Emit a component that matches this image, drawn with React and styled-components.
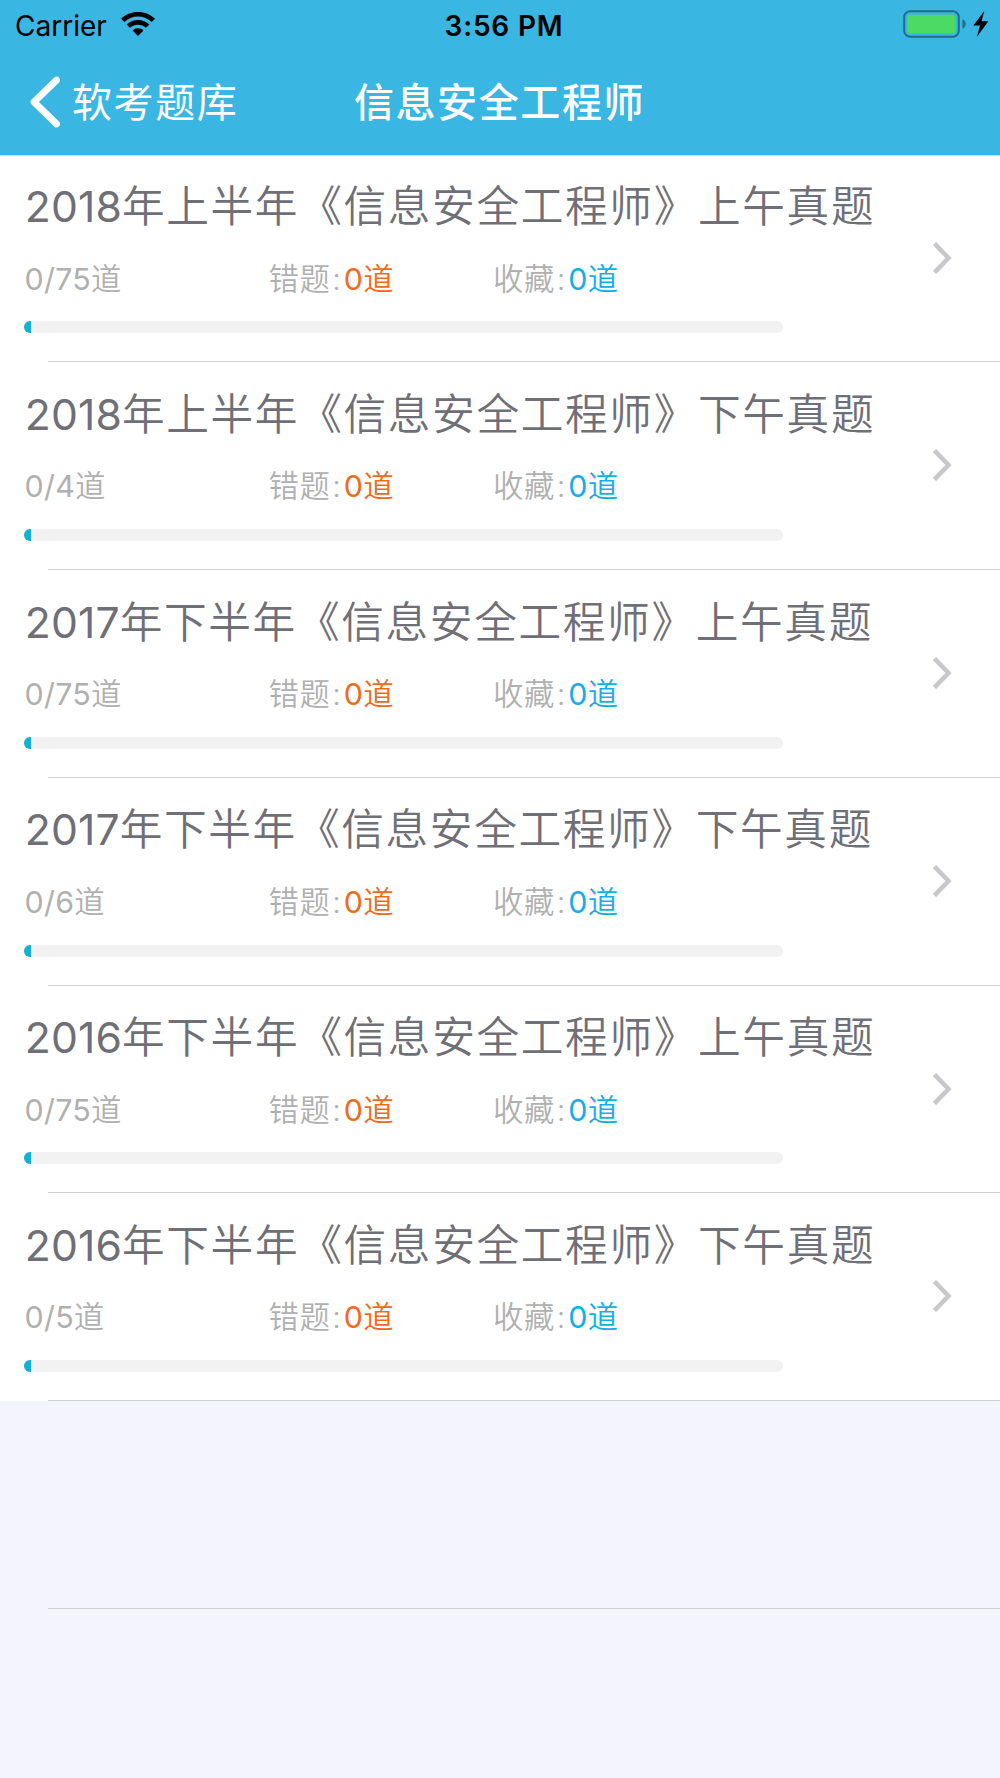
import React from 'react'
import styled, { createGlobalStyle } from 'styled-components'

const papers = [
    { year: '2018', term: '上半年', part: '上午真题', total: 75 },
    { year: '2018', term: '上半年', part: '下午真题', total: 4 },
    { year: '2017', term: '下半年', part: '上午真题', total: 75 },
    { year: '2017', term: '下半年', part: '下午真题', total: 6 },
    { year: '2016', term: '下半年', part: '上午真题', total: 75 },
    { year: '2016', term: '下半年', part: '下午真题', total: 5 },
]

function StatusBar() {
    return (
        <Status>
            <Carrier>
                Carrier
                <svg width="34" height="24" viewBox="0 0 34 24">
                    <path d="M17 0C10.400 0 4.400 2.600 0 6.800L3.300 10.100A19.600 19.600 0 0 1 30.700 10.100L34 6.800C29.600 2.600 23.600 0 17 0Z" />
                    <path d="M17 8C12.700 8 8.700 9.700 5.700 12.500L9 15.800A11.700 11.700 0 0 1 25 15.800L28.300 12.500C25.300 9.700 21.300 8 17 8Z" />
                    <path d="M17 16.300C14.900 16.300 13 17.100 11.600 18.400L17 24L22.400 18.400C21 17.100 19.100 16.300 17 16.300Z" />
                </svg>
            </Carrier>
            <Time>3:56 PM</Time>
            <Power>
                <svg width="63" height="28" viewBox="0 0 63 28">
                    <rect x="1.200" y="1.200" width="54.600" height="25.600" rx="6" fill="none" stroke="#226c88" strokeWidth="2" />
                    <rect x="4.500" y="4.800" width="48" height="18.600" rx="3" fill="#4cd964" />
                    <path d="M59.500 9.300C61.500 10 62.700 12 62.700 14S61.500 18 59.500 18.700Z" fill="#226c88" />
                </svg>
                <svg width="16" height="26" viewBox="0 0 16 26">
                    <path d="M11.300 0L0.300 14.500H7L3.800 26L15.300 10.300H8.500Z" />
                </svg>
            </Power>
        </Status>
    )
}

function NavBar() {
    return (
        <Nav>
            <Back>
                <svg width="30" height="52" viewBox="0 0 30 52">
                    <path d="M26.600 4L4 26L26.600 48" fill="none" stroke="#fff" strokeWidth="6.800" strokeLinecap="round" strokeLinejoin="round" />
                </svg>
                <span>软考题库</span>
            </Back>
            <NavTitle>信息安全工程师</NavTitle>
        </Nav>
    )
}

function PaperRow({ paper }) {
    return (
        <Row>
            <Body>
                <Title>
                    <Year>{paper.year}</Year>年{paper.term}《信息安全工程师》{paper.part}
                </Title>
                <Stats>
                    <Stat><Num>0/{paper.total}</Num>道</Stat>
                    <Stat>错题<Colon>:</Colon><Count color="#f26a21"><Num>0</Num>道</Count></Stat>
                    <Stat>收藏<Colon>:</Colon><Count color="#12aee6"><Num>0</Num>道</Count></Stat>
                </Stats>
                <Progress><Fill /></Progress>
            </Body>
            <Chevron width="19" height="32" viewBox="0 0 19 32">
                <path d="M1.500 1.500L15.500 16L1.500 30.500" fill="none" stroke="#c7c7cc" strokeWidth="4.500" />
            </Chevron>
        </Row>
    )
}

function App() {
    return (
        <Screen>
            <GlobalStyle />
            <Header>
                <StatusBar />
                <NavBar />
            </Header>
            {papers.map((paper, i) => <PaperRow key={i} paper={paper} />)}
            <EmptyRow />
        </Screen>
    )
}

export default App

const GlobalStyle = createGlobalStyle`
    body{
        margin: 0;
        background: #f4f4ff;
        font-family: Inter, "Noto Sans CJK SC", sans-serif;
    }

    svg{
        display: block;
        flex-shrink: 0;
    }
`

const Screen = styled.div`
    width: 1000px;
    height: 1778px;
    overflow: hidden;
    background: #f4f4ff;
`

const Header = styled.header`
    height: 156px;
    margin-bottom: -1.300px;
    box-sizing: border-box;
    background: #3ab6e3;
    border-bottom: 1px solid #d5dfe3;
    position: relative;
`

const Status = styled.div`
    display: grid;
    grid-template-columns: 1fr auto 1fr;
    align-items: center;
    height: 50px;
    padding: 0 11px 0 15px;
    font-size: 28px;
`

const Carrier = styled.div`
    display: flex;
    align-items: center;
    gap: 14px;
    padding-top: 1px;

    svg{
        margin-top: -3px;
    }
`

const Time = styled.div`
    padding: 1px 0 0 4px;
    font-weight: 600;
    letter-spacing: 0.800px;
`

const Power = styled.div`
    display: flex;
    align-items: center;
    justify-content: flex-end;
    gap: 7px;
    margin-top: -2px;
`

const Nav = styled.nav`
    display: grid;
    grid-template-columns: 1fr auto 1fr;
    align-items: center;
    height: 104px;
    padding: 0 31px 0 30px;
    color: white;
    font-size: 40px;
    letter-spacing: 1.600px;
    white-space: nowrap;

    span{
        margin-top: -4px;
    }
`

const Back = styled.div`
    display: flex;
    align-items: center;
    gap: 12px;
`

const NavTitle = styled.div`
    margin-top: -4px;
    font-weight: 500;
`

const Row = styled.div`
    display: flex;
    align-items: center;
    justify-content: space-between;
    height: 207.750px;
    box-sizing: border-box;
    padding: 0 48px 0 24px;
    background: linear-gradient(#cfcfd2, #cfcfd2) 48px 100% / 100% 1px no-repeat white;
`

const EmptyRow = styled(Row)`
    background-color: transparent;
`

const Chevron = styled.svg`
    margin-top: -2px;
`

const Body = styled.div`
    display: flex;
    flex-direction: column;
    height: 100%;
    white-space: nowrap;
`

const Title = styled.div`
    height: 60px;
    margin-top: 22.300px;
    line-height: 60px;
    font-size: 42.700px;
    font-weight: 350;
    letter-spacing: 1.620px;
    color: #6f6f78;
`

const Year = styled.span`
    margin-left: 0.800px;
    font-weight: 400;
    letter-spacing: 0.100px;
`

const Stats = styled.div`
    display: grid;
    grid-template-columns: 244.500px 224.500px 1fr;
    height: 40px;
    margin-top: 21.500px;
    line-height: 40px;
    font-size: 30.400px;
    font-weight: 350;
    letter-spacing: 0.700px;
    color: #b0b0b0;
`

const Stat = styled.div``

const Num = styled.span`
    margin-left: 0.500px;
    font-weight: 400;
    letter-spacing: 0.250px;
`

const Colon = styled.span`
    display: inline-block;
    width: 11px;
    padding-left: 1.500px;
`

const Count = styled.span`
    color: ${props => props.color};
`

const Progress = styled.div`
    width: 759px;
    height: 12px;
    margin-top: 22.900px;
    overflow: hidden;
    border-radius: 6px;
    background: #f2f2f2;
`

const Fill = styled.div`
    width: 7px;
    height: 100%;
    border-right: 1px solid white;
    background: #14aede;
`
